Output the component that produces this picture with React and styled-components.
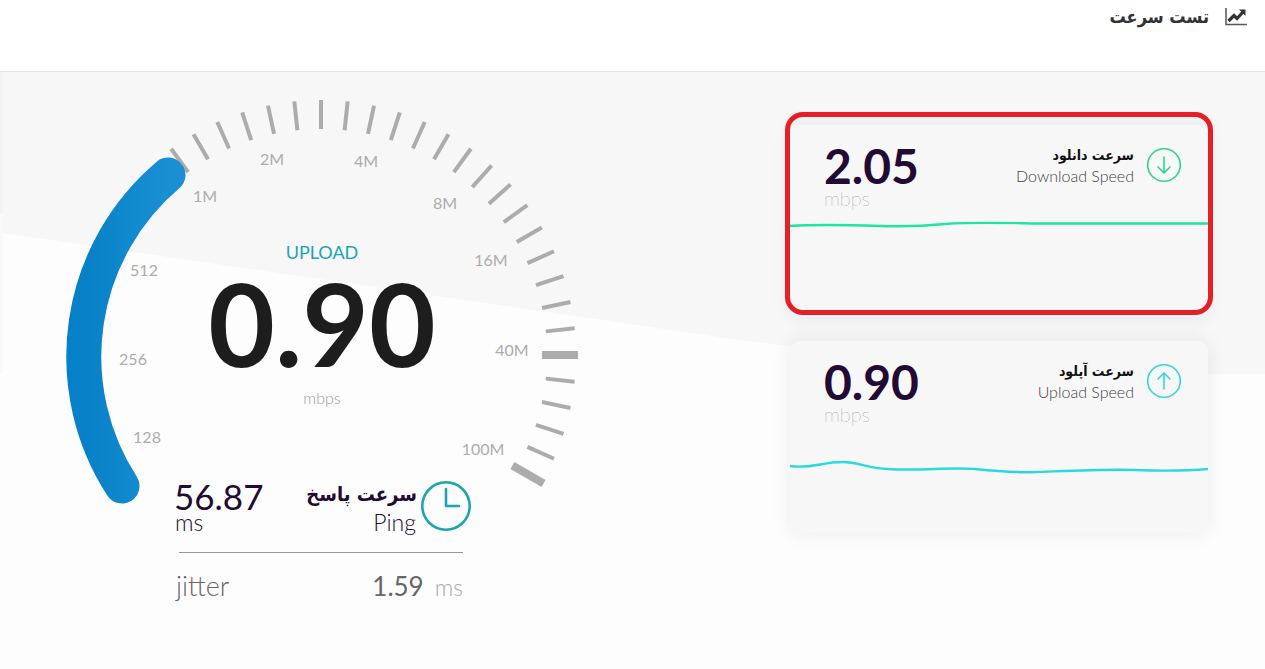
import React from 'react';
import styled, { createGlobalStyle } from 'styled-components';

const GlobalStyle = createGlobalStyle`
    * {
        box-sizing: border-box;
    }

    body {
        margin: 0;
        background-color: #fdfdfd;
        font-family: Lato, "DejaVu Sans", sans-serif;
    }

    h1, h2, p, dl, dt, dd {
        margin: 0;
    }
`;

const persianFont = '"DejaVu Sans Condensed", "DejaVu Sans", sans-serif';

const gaugeLabels = [
    { text: '128', x: 81, y: 343 },
    { text: '256', x: 67, y: 265 },
    { text: '512', x: 78, y: 176 },
    { text: '1M', x: 139, y: 102 },
    { text: '2M', x: 206, y: 65 },
    { text: '4M', x: 300, y: 67 },
    { text: '8M', x: 379, y: 109 },
    { text: '16M', x: 425, y: 166 },
    { text: '40M', x: 446, y: 256 },
    { text: '100M', x: 417, y: 355 },
];

// one tick each 6 degrees, clockwise from the top
const ticks = [];
for (let angle = -36; angle <= 120; angle += 6) {
    ticks.push({ angle, isMajor: angle === 90 || angle === 120 });
}

export default function App() {
    return (
        <>
            <GlobalStyle />
            <Header dir="rtl">
                <ChartIcon />
                <PageTitle>تست سرعت</PageTitle>
            </Header>
            <Main>
                <Backdrop viewBox="0 0 1265 302" preserveAspectRatio="none" aria-hidden="true">
                    <path d="M0 0H1265V302H1215C1080 300 940 290 800 275Q770 272 740 268L3 161V142H0Z" fill="#f7f7f7" />
                    <path d="M0 0H3V142H0Z" fill="#f2f2f2" />
                    <path d="M0 142H3V302H0Z" fill="#f9f9f9" />
                </Backdrop>
                <TestColumn>
                    <Gauge status="UPLOAD" value="0.90" unit="mbps" />
                    <PingPanel />
                </TestColumn>
                <CardsColumn>
                    <SpeedCard
                        isHighlighted
                        value="2.05"
                        title="سرعت دانلود"
                        subtitle="Download Speed"
                        color="#2bd591"
                        lineColor="#1fe5a2"
                        arrow="M17 9V25M11 19L17 25L23 19"
                        line="M0 21C30 19 60 20 90 21C120 22 135 21 155 19C185 17 215 18 250 18.500H418"
                    />
                    <SpeedCard
                        value="0.90"
                        title="سرعت آپلود"
                        subtitle="Upload Speed"
                        color="#2fd7dc"
                        lineColor="#2ad9e0"
                        arrow="M17 25V9M11 15L17 9L23 15"
                        line="M0 45C22 48 32 41 52 41C70 41 75 47 98 48C130 50 160 46 185 48C205 50 225 52 245 51C275 50 315 48 345 49C370 50 395 50 418 48"
                    />
                </CardsColumn>
            </Main>
        </>
    );
}

function Gauge({ status, value, unit }) {
    return (
        <GaugeSvg viewBox="0 0 512 380" role="img" aria-label={`${status} ${value} ${unit}`}>
            <defs>
                <linearGradient id="arcGradient" x1="0" y1="0" x2="1" y2="0">
                    <stop offset="0" stopColor="#0680c7" />
                    <stop offset="1" stopColor="#1a90d3" />
                </linearGradient>
            </defs>
            {ticks.map(({ angle, isMajor }) => (
                <line
                    key={angle}
                    x1="255"
                    x2="255"
                    y1={isMajor ? -2 : 0}
                    y2={isMajor ? 34 : 29}
                    stroke="#acacac"
                    strokeWidth={isMajor ? 8 : 4}
                    transform={`rotate(${angle} 255 255)`}
                />
            ))}
            <path
                d="M56 386A238 238 0 0 1 102 75"
                fill="none"
                stroke="url(#arcGradient)"
                strokeWidth="35"
                strokeLinecap="round"
            />
            {gaugeLabels.map(({ text, x, y }) => (
                <GaugeLabel key={text} x={x} y={y}>{text}</GaugeLabel>
            ))}
            <GaugeStatus x="256" y="159">{status}</GaugeStatus>
            <GaugeValue x="256" y="267">{value}</GaugeValue>
            <GaugeUnit x="256" y="304">{unit}</GaugeUnit>
        </GaugeSvg>
    );
}

function PingPanel() {
    return (
        <Ping>
            <PingRow>
                <div>
                    <PingValue>56.87</PingValue>
                    <PingUnit>ms</PingUnit>
                </div>
                <PingName>
                    <PingTitle lang="fa" dir="rtl">سرعت پاسخ</PingTitle>
                    <PingUnit>Ping</PingUnit>
                </PingName>
                <ClockIcon />
            </PingRow>
            <JitterRow>
                <dt>jitter</dt>
                <dd>
                    <JitterValue>1.59</JitterValue>
                    <JitterUnit>ms</JitterUnit>
                </dd>
            </JitterRow>
        </Ping>
    );
}

function SpeedCard({ value, title, subtitle, color, lineColor, arrow, line, isHighlighted }) {
    return (
        <Card>
            <CardTop>
                <div>
                    <CardValue>{value}</CardValue>
                    <CardUnit>mbps</CardUnit>
                </div>
                <CardName>
                    <CardTitle lang="fa" dir="rtl">{title}</CardTitle>
                    <CardSubtitle>{subtitle}</CardSubtitle>
                </CardName>
                <ArrowSvg viewBox="0 0 34 34" stroke={color} aria-hidden="true">
                    <circle cx="17" cy="17" r="16.300" />
                    <path d={arrow} />
                </ArrowSvg>
            </CardTop>
            <LineSvg viewBox="0 0 418 80" preserveAspectRatio="none" stroke={lineColor} aria-hidden="true">
                <path d={line} />
            </LineSvg>
            {isHighlighted && <Highlight />}
        </Card>
    );
}

function ChartIcon() {
    return (
        <HeaderSvg viewBox="0 0 22 18" aria-hidden="true">
            <path d="M1 0V16.500H22" stroke="#555" strokeWidth="1.500" fill="none" />
            <path d="M3.500 13L9 7.500L12 10.500L18 4" stroke="#333" strokeWidth="3.200" fill="none" />
            <path d="M14 1.500H20.500V8Z" fill="#333" />
        </HeaderSvg>
    );
}

function ClockIcon() {
    return (
        <ClockSvg viewBox="0 0 50 50" aria-hidden="true">
            <circle cx="25" cy="25" r="23.700" />
            <path d="M25 8V25H38" />
        </ClockSvg>
    );
}

const Header = styled.header`
    display: flex;
    align-items: flex-start;
    gap: 16px;
    height: 72px;
    padding: 8px 18px;
    background-color: #fff;
    border-bottom: 1px solid #e7e7e7;
`;

const HeaderSvg = styled.svg`
    width: 22px;
    height: 18px;
`;

const PageTitle = styled.h1`
    font: bold 18px/18px ${persianFont};
    color: #333;
`;

const Main = styled.main`
    position: relative;
    display: grid;
    grid-template-columns: 512px minmax(320px, 418px);
    justify-content: space-between;
    align-items: start;
    gap: 40px;
    min-height: calc(100vh - 72px);
    padding: 28px 57px 60px 66px;
`;

const Backdrop = styled.svg`
    position: absolute;
    top: 0;
    left: 0;
    width: 100%;
    height: 302px;
`;

const TestColumn = styled.section`
    position: relative;
`;

const GaugeSvg = styled.svg`
    display: block;
    width: 100%;
    overflow: visible;
    font-family: Lato, sans-serif;
    text-anchor: middle;
`;

const GaugeLabel = styled.text`
    font-size: 16px;
    fill: #acacac;
`;

const GaugeStatus = styled.text`
    font-size: 18px;
    fill: #1ba5b3;
`;

const GaugeValue = styled.text`
    font-size: 115px;
    font-weight: 700;
    fill: #1d1d1d;
`;

const GaugeUnit = styled.text`
    font-size: 16px;
    font-weight: 300;
    fill: #9c9c9c;
`;

const Ping = styled.div`
    width: 300px;
    margin-left: 108px;
    color: #230a35;
`;

const PingRow = styled.div`
    display: flex;
    align-items: flex-start;
    gap: 4px;
    width: 297px;
    height: 72px;
    padding-top: 1px;
`;

const PingValue = styled.p`
    font-size: 35px;
    line-height: 30px;
`;

const PingUnit = styled.p`
    padding: 0 1px;
    font-size: 23px;
    font-weight: 300;
    line-height: 22px;
`;

const PingName = styled.div`
    flex: 1;
    text-align: right;
`;

const PingTitle = styled.h2`
    padding-bottom: 4px;
    font: bold 20px/26px ${persianFont};
    white-space: nowrap;
`;

const ClockSvg = styled.svg`
    flex: none;
    width: 50px;
    height: 50px;
    fill: none;
    stroke: #1ba5b3;
    stroke-width: 2.6;
    stroke-linecap: round;
    stroke-linejoin: round;
`;

const JitterRow = styled.dl`
    display: flex;
    justify-content: space-between;
    align-items: baseline;
    width: 284px;
    margin-left: 5px;
    padding-top: 15px;
    border-top: 1px solid #979797;
    color: #666;
    font-size: 26px;
    line-height: 36px;

    dt {
        margin-left: -3px;
        font-size: 27px;
        font-weight: 300;
    }
`;

const JitterValue = styled.span`
    font-weight: 400;
`;

const JitterUnit = styled.span`
    margin-left: 11px;
    color: #aaa;
    font-size: 23px;
    font-weight: 300;
`;

const CardsColumn = styled.section`
    position: relative;
    display: grid;
    gap: 24px;
    padding-top: 25px;
`;

const Card = styled.article`
    position: relative;
    height: 192px;
    background-color: #f7f7f7;
    border-radius: 10px;
    box-shadow: 0 0 20px rgba(0, 0, 0, 0.08);
`;

const CardTop = styled.div`
    display: flex;
    align-items: flex-start;
    height: 80px;
    padding: 19px 27px 0 34px;
`;

const CardValue = styled.p`
    font-size: 48px;
    font-weight: 700;
    line-height: 44px;
    color: #230a35;
`;

const CardUnit = styled.p`
    font-size: 20px;
    font-weight: 100;
    line-height: 20px;
    color: #555;
`;

const CardName = styled.div`
    flex: 1;
    padding-right: 13px;
    text-align: right;
    color: #111;
`;

const CardTitle = styled.h2`
    font: bold 14px/22px ${persianFont};
`;

const CardSubtitle = styled.p`
    font-size: 16px;
    font-weight: 300;
    line-height: 20px;
    color: #444;
`;

const ArrowSvg = styled.svg`
    flex: none;
    width: 34px;
    height: 34px;
    margin-top: 4px;
    fill: none;
    stroke-width: 1.6;
    stroke-linecap: round;
    stroke-linejoin: round;
    overflow: visible;
`;

const LineSvg = styled.svg`
    display: block;
    width: 100%;
    height: 80px;
    fill: none;
    stroke-width: 2.4;
`;

// red frame round the card
const Highlight = styled.span`
    position: absolute;
    top: -13px;
    right: -5px;
    bottom: 2px;
    left: -5px;
    border: 5px solid #e61e25;
    border-radius: 18px;
`;
